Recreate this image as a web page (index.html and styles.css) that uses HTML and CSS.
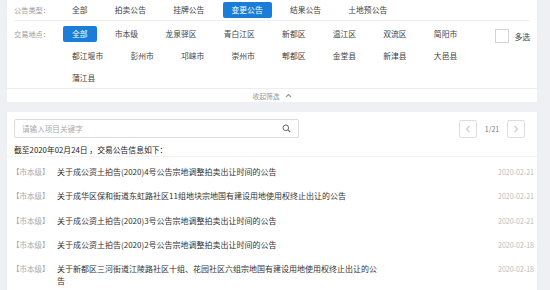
FILE: index.html
```html
<!DOCTYPE html>
<html lang="zh-CN">
<head>
	<meta charset="UTF-8">
	<title>交易公告</title>
	<link rel="stylesheet" href="styles.css">
</head>
<body>
	<div class="page">
		<div class="panel filter">
			<div class="filter-row type-row">
				<span class="filter-label">公告类型：</span>
				<ul class="options">
					<li>全部</li>
					<li>拍卖公告</li>
					<li>挂牌公告</li>
					<li class="active">变更公告</li>
					<li>结果公告</li>
					<li>土地预公告</li>
				</ul>
			</div>
			<div class="filter-row place-row">
				<span class="filter-label">交易地点：</span>
				<ul class="options places">
					<li class="active">全部</li>
					<li>市本级</li>
					<li>龙泉驿区</li>
					<li>青白江区</li>
					<li>新都区</li>
					<li>温江区</li>
					<li>双流区</li>
					<li>简阳市</li>
					<li>都江堰市</li>
					<li>彭州市</li>
					<li>邛崃市</li>
					<li>崇州市</li>
					<li>郫都区</li>
					<li>金堂县</li>
					<li>新津县</li>
					<li>大邑县</li>
					<li>蒲江县</li>
				</ul>
				<label class="multi"><span class="check-box"></span>多选</label>
			</div>
			<div class="collapse">收起筛选
				<svg width="7" height="5" viewBox="0 0 7 5"><path d="M1 4 L3.5 1.5 L6 4" fill="none" stroke="#999" stroke-width="1.1"/></svg>
			</div>
		</div>

		<div class="panel list-panel">
			<div class="toolbar">
				<div class="search">
					<span class="placeholder">请输入项目关键字</span>
					<svg width="9" height="9" viewBox="0 0 9 9"><circle cx="3.8" cy="3.8" r="2.8" fill="none" stroke="#666" stroke-width="1"/><path d="M5.9 5.9 L8.2 8.2" stroke="#666" stroke-width="1.1"/></svg>
				</div>
				<div class="pager">
					<span class="page-btn">
						<svg width="6" height="8" viewBox="0 0 6 8"><path d="M4.5 1 L1.5 4 L4.5 7" fill="none" stroke="#ccc" stroke-width="1.2"/></svg>
					</span>
					<span class="page-num">1/21</span>
					<span class="page-btn">
						<svg width="6" height="8" viewBox="0 0 6 8"><path d="M1.5 1 L4.5 4 L1.5 7" fill="none" stroke="#ccc" stroke-width="1.2"/></svg>
					</span>
				</div>
			</div>
			<p class="summary">截至2020年02月24日 ，交易公告信息如下：</p>
			<ul class="notice-list">
				<li>
					<span class="area">【市本级】</span>
					<span class="title">关于成公资土拍告(2020)4号公告宗地调整拍卖出让时间的公告</span>
					<span class="date">2020-02-21</span>
				</li>
				<li>
					<span class="area">【市本级】</span>
					<span class="title">关于成华区保和街道东虹路社区11组地块宗地国有建设用地使用权终止出让的公告</span>
					<span class="date">2020-02-21</span>
				</li>
				<li>
					<span class="area">【市本级】</span>
					<span class="title">关于成公资土拍告(2020)3号公告宗地调整拍卖出让时间的公告</span>
					<span class="date">2020-02-21</span>
				</li>
				<li>
					<span class="area">【市本级】</span>
					<span class="title">关于成公资土拍告(2020)2号公告宗地调整拍卖出让时间的公告</span>
					<span class="date">2020-02-18</span>
				</li>
				<li>
					<span class="area">【市本级】</span>
					<span class="title">关于新都区三河街道江陵路社区十组、花园社区六组宗地国有建设用地使用权终止出让的公告</span>
					<span class="date">2020-02-18</span>
				</li>
			</ul>
		</div>
	</div>
</body>
</html>
```

FILE: styles.css
```css
html, body, div, ul, li, p {
	padding: 0;
	margin: 0;
}
body {
	background: #eef0f4;
	font-family: "Noto Sans CJK SC", "Liberation Sans", sans-serif;
	color: #333;
}
ul {
	list-style: none;
}
.page {
	width: 530px;
	padding: 0 13px 0 7px;
}
.panel {
	background: #fff;
}

/* filter panel */
.filter {
	padding-top: 2px;
}
.filter-row {
	display: flex;
	align-items: flex-start;
}
.type-row {
	margin: 0 7px;
	padding-bottom: 2px;
	border-bottom: 1px solid #eee;
}
.place-row {
	padding: 5px 7px 2px;
}
.filter-label {
	width: 49px;
	flex-shrink: 0;
	height: 16px;
	line-height: 16px;
	font-size: 7.2px;
	color: #999;
}
.options {
	display: flex;
	flex-wrap: wrap;
	gap: 6px 9.2px;
}
.places {
	width: 420px;
}
.options li {
	height: 16px;
	line-height: 16px;
	padding: 0 9px;
	font-size: 7.8px;
	color: #444;
	border-radius: 2px;
}
.options li.active {
	background: #1a7dd7;
	color: #fff;
}
.multi {
	margin-left: auto;
	display: flex;
	align-items: center;
	height: 16px;
	margin-top: 2px;
	font-size: 7.8px;
	color: #444;
}
.check-box {
	width: 12px;
	height: 12px;
	border: 1px solid #d4d4d4;
	margin-right: 5px;
}
.collapse {
	border-top: 1px solid #eee;
	height: 13px;
	line-height: 12px;
	display: flex;
	justify-content: center;
	align-items: center;
	gap: 5px;
	font-size: 6.8px;
	color: #999;
}

/* list panel */
.list-panel {
	margin-top: 10px;
	min-height: 200px;
}
.toolbar {
	display: flex;
	justify-content: space-between;
	align-items: center;
	padding: 7px 12px 0 7px;
}
.search {
	width: 281px;
	height: 17px;
	border: 1px solid #dcdcdc;
	border-radius: 2px;
	display: flex;
	align-items: center;
	justify-content: space-between;
	padding: 0 7px 0 7px;
	box-sizing: content-box;
	width: 269px;
}
.placeholder {
	font-size: 7.6px;
	color: #aaa;
}
.pager {
	display: flex;
	align-items: center;
}
.page-btn {
	width: 16px;
	height: 16px;
	border: 1px solid #ddd;
	border-radius: 2px;
	display: flex;
	align-items: center;
	justify-content: center;
}
.page-num {
	font-size: 7px;
	color: #777;
	width: 30px;
	text-align: center;
}
.summary {
	margin-top: 5px;
	padding: 0 7px 0 7px;
	height: 13px;
	line-height: 13px;
	font-size: 7.8px;
	color: #222;
	border-bottom: 1px solid #f2f2f2;
}
.notice-list {
	padding-top: 3px;
}
.notice-list li {
	display: flex;
	align-items: flex-start;
	padding: 6px 3px 6px 5px;
	line-height: 12.3px;
}
.area {
	width: 45px;
	flex-shrink: 0;
	font-size: 7.5px;
	color: #aaa;
}
.title {
	width: 322px;
	font-size: 8px;
	color: #333;
}
.date {
	margin-left: auto;
	font-size: 7px;
	color: #bbb;
}
```
